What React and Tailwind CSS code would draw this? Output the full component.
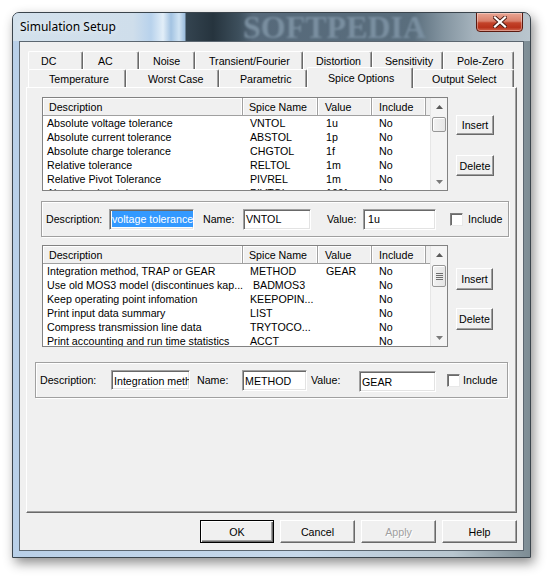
import React from "react";

// tab rows (widths and text offsets read off the dialog)
const tabsTop = [
  { label: "DC", cls: "w-[55px] pl-[12px]" },
  { label: "AC", cls: "w-[56px] pl-[14px]" },
  { label: "Noise", cls: "w-[56px] pl-[13px]" },
  { label: "Transient/Fourier", cls: "w-[108px] pl-[13px]" },
  { label: "Distortion", cls: "w-[69px] pl-[12px]" },
  { label: "Sensitivity", cls: "w-[71px] pl-[12px]" },
  { label: "Pole-Zero", cls: "w-[71px] pl-[13px]" },
];

const tabsBottom = [
  { label: "Temperature", cls: "w-[98px] pl-[20px]" },
  { label: "Worst Case", cls: "w-[93px] pl-[21px]" },
  { label: "Parametric", cls: "w-[88px] pl-[20px]" },
  { label: "Spice Options", cls: "w-[106px] pl-[20px]", selected: true },
  { label: "Output Select", cls: "w-[101px] pl-[18px]" },
];

const options = [
  ["Absolute voltage tolerance", "VNTOL", "1u", "No"],
  ["Absolute current tolerance", "ABSTOL", "1p", "No"],
  ["Absolute charge tolerance", "CHGTOL", "1f", "No"],
  ["Relative tolerance", "RELTOL", "1m", "No"],
  ["Relative Pivot Tolerance", "PIVREL", "1m", "No"],
  ["Absolute pivot tolerance", "PIVTOL", "100f", "No"],
];

const flags = [
  ["Integration method, TRAP or GEAR", "METHOD", "GEAR", "No"],
  ["Use old MOS3 model (discontinues kap...", "\u00a0BADMOS3", "", "No"],
  ["Keep operating point infomation", "KEEPOPIN...", "", "No"],
  ["Print input data summary", "LIST", "", "No"],
  ["Compress transmission line data", "TRYTOCO...", "", "No"],
  ["Print accounting and run time statistics", "ACCT", "", "No"],
];

function Tab({ label, cls, selected }) {
  if (selected) {
    return (
      <div
        className={`relative z-10 -mb-px flex h-[21px] items-center rounded-t-[2px] border-t border-l border-r border-t-white border-l-white border-r-[#696969] bg-[#f0f0f0] shadow-[inset_-1px_0_0_#a0a0a0] ${cls}`}
      >
        {label}
      </div>
    );
  }
  return (
    <div
      className={`flex h-[18px] items-center rounded-t-[2px] border-t border-l border-r border-t-white border-l-white border-r-[#696969] bg-[#f0f0f0] pt-[1px] shadow-[inset_-1px_0_0_#a0a0a0] ${cls}`}
    >
      {label}
    </div>
  );
}

function Btn({ children, cls, isDefault, disabled }) {
  const edge = isDefault
    ? "border-black shadow-[inset_1px_1px_0_#fff,inset_-1px_-1px_0_#696969,inset_-2px_-2px_0_#a0a0a0]"
    : "border-t-white border-l-white border-r-[#696969] border-b-[#696969] shadow-[inset_-1px_-1px_0_#a0a0a0]";
  return (
    <button
      type="button"
      className={`flex items-center justify-center border bg-[#f0f0f0] ${edge} ${
        disabled ? "text-[#a0a0a0] [text-shadow:1px_1px_0_#fff]" : "text-black"
      } ${cls}`}
    >
      {children}
    </button>
  );
}

function Field({ cls, children, top }) {
  return (
    <div
      className={`flex overflow-hidden whitespace-nowrap border border-t-[#a0a0a0] border-l-[#a0a0a0] border-r-white border-b-white bg-white pl-[2px] shadow-[inset_1px_1px_0_#696969,inset_-1px_-1px_0_#e3e3e3] ${
        top ? "items-start pt-[2px]" : "items-center pb-[1px]"
      } ${cls}`}
    >
      {children}
    </div>
  );
}

function Check() {
  return (
    <div className="h-[13px] w-[13px] shrink-0 border border-t-[#808080] border-l-[#808080] border-r-[#e8e8e8] border-b-[#e8e8e8] bg-white shadow-[inset_1px_1px_0_#6a6a6a]" />
  );
}

function Arrow({ up }) {
  return (
    <svg width="7" height="4" viewBox="0 0 7 4">
      {up ? (
        <path d="M0 4 L3.5 0 L7 4 Z" fill="#5a5a5a" />
      ) : (
        <path d="M0 0 L3.5 4 L7 0 Z" fill="#7a7a7a" />
      )}
    </svg>
  );
}

function Scrollbar({ thumbCls, grip }) {
  return (
    <div className="flex w-[17px] shrink-0 flex-col border-l border-[#e6e6e6] bg-[#f4f4f4]">
      <div className="flex h-[17px] shrink-0 items-center justify-center">
        <Arrow up />
      </div>
      <div className="flex flex-1 flex-col px-[1px]">
        <div
          className={`flex items-center justify-center rounded-[2px] border border-[#979797] bg-[linear-gradient(90deg,#f2f2f2,#e6e6e6)] shadow-[inset_1px_1px_0_#fff] ${thumbCls}`}
        >
          {grip && (
            <div className="flex flex-col gap-[1px]">
              <div className="h-px w-[7px] bg-[#6e6e6e]" />
              <div className="h-px w-[7px] bg-[#6e6e6e]" />
              <div className="h-px w-[7px] bg-[#6e6e6e]" />
              <div className="h-px w-[7px] bg-[#6e6e6e]" />
            </div>
          )}
        </div>
      </div>
      <div className="flex h-[17px] shrink-0 items-center justify-center">
        <Arrow />
      </div>
    </div>
  );
}

function HeadCell({ cls, children }) {
  return (
    <div
      className={`flex items-center border-r border-b border-[#a0a0a0] shadow-[inset_1px_1px_0_#fff,inset_-1px_0_0_#fff] ${cls}`}
    >
      {children}
    </div>
  );
}

function ListView({ rows, hCls, thumbCls, grip }) {
  return (
    <div
      className={`flex w-[406px] shrink-0 overflow-hidden border border-[#828282] bg-white ${hCls}`}
    >
      <div className="flex min-w-0 flex-1 flex-col">
        <div className="flex h-[18px] shrink-0 bg-[#f0f0f0]">
          <HeadCell cls="w-[200px] pl-[6px]">Description</HeadCell>
          <HeadCell cls="w-[75px] pl-[6px]">Spice Name</HeadCell>
          <HeadCell cls="w-[54px] pl-[7px]">Value</HeadCell>
          <HeadCell cls="w-[54px] pl-[7px]">Include</HeadCell>
          <div className="flex-1 border-b border-[#a0a0a0]" />
        </div>
        {rows.map((r) => (
          <div key={r[0]} className="flex h-[14px] shrink-0 items-center leading-[14px]">
            <div className="w-[200px] overflow-hidden whitespace-nowrap pl-[4px]">{r[0]}</div>
            <div className="w-[75px] overflow-hidden whitespace-nowrap pl-[7px]">{r[1]}</div>
            <div className="w-[54px] overflow-hidden whitespace-nowrap pl-[8px]">{r[2]}</div>
            <div className="w-[54px] overflow-hidden whitespace-nowrap pl-[7px]">{r[3]}</div>
          </div>
        ))}
      </div>
      <Scrollbar thumbCls={thumbCls} grip={grip} />
    </div>
  );
}

export default function App() {
  return (
    <div className="min-h-screen bg-white pl-[12px] pt-[12px] font-['Liberation_Sans',Arial,sans-serif] text-[10.67px] text-black">
      <div className="flex h-[546px] w-[519px] flex-col rounded-t-[7px] border border-[#3a444c] bg-[linear-gradient(90deg,#b9d0e8_0%,#c6d8ea_55%,#b8c6cf_85%,#7d8c94_100%)] shadow-[3px_5px_12px_rgba(0,0,0,0.45)]">
        {/* title bar */}
        <div className="relative flex h-[28px] shrink-0 items-start overflow-hidden rounded-t-[6px] bg-[linear-gradient(90deg,#d3e1ec_0px,#cfdeeb_120px,#b8d2ec_138px,#e2eef8_150px,#a3c3e2_158px,#d0e3f3_166px,#9cbcdc_172px,#344450_173px,#26343e_200px,#3d4f5c_226px,#56697a_240px,#5a6e7d_400px,#8394a0_430px,#a4b2bc_460px,#bac6ce_517px)]">
          <span className="relative z-10 ml-[7px] mt-[6px] font-['Noto_Sans',sans-serif] text-[12px] leading-[16px] text-black [text-shadow:0_0_6px_#fff]">
            Simulation Setup
          </span>
          <span className="pointer-events-none absolute left-[230px] top-[-2px] font-['Liberation_Serif',serif] text-[32px] font-bold leading-[32px] text-[#7a8fa0] blur-[1px]">
            SOFTPEDIA
          </span>
          <div className="relative z-10 ml-auto mr-[7px] -mt-px flex h-[20px] w-[47px] items-center justify-center rounded-b-[4px] border border-[#5b1a10] bg-[linear-gradient(180deg,#e9a694_0%,#d9806b_45%,#c3432a_55%,#b8321b_80%,#d0674f_100%)] shadow-[inset_0_0_0_1px_rgba(255,255,255,0.35)]">
            <svg width="14" height="12" viewBox="0 0 14 12">
              <path d="M2 1.5 L12 10.5 M12 1.5 L2 10.5" stroke="#4a1c14" strokeWidth="4" strokeLinecap="square" />
              <path d="M2 1.5 L12 10.5 M12 1.5 L2 10.5" stroke="#fff" strokeWidth="2.2" strokeLinecap="square" />
            </svg>
          </div>
        </div>

        {/* client area */}
        <div className="mx-[6px] flex h-[510px] shrink-0 flex-col border border-[#5b6670] bg-[#f0f0f0] pl-[6px] pt-[9px]">
          {/* tabs */}
          <div className="pl-[2px]">
            <div className="flex h-[18px]">
              {tabsTop.map((t) => (
                <Tab key={t.label} {...t} />
              ))}
            </div>
            <div className="flex h-[18px] items-end">
              {tabsBottom.map((t) => (
                <Tab key={t.label} {...t} />
              ))}
            </div>
          </div>

          {/* tab page */}
          <div className="flex h-[426px] w-[491px] flex-col border border-t-white border-l-white border-r-[#696969] border-b-[#696969] bg-[#f0f0f0] shadow-[inset_-1px_-1px_0_#a0a0a0]">
            {/* options list */}
            <div className="ml-[15px] mt-[9px] flex">
              <ListView rows={options} hCls="h-[94px]" thumbCls="mt-[2px] h-[15px]" />
              <div className="ml-[8px] flex flex-col">
                <Btn cls="mt-[18px] h-[20px] w-[38px]">Insert</Btn>
                <Btn cls="mt-[20px] h-[21px] w-[38px]">Delete</Btn>
              </div>
            </div>

            {/* edit group 1 */}
            <div className="ml-[14px] mt-[10px] flex h-[36px] w-[468px] items-center border border-[#a0a0a0] pl-[4px] shadow-[inset_1px_1px_0_#fff,1px_1px_0_#fff]">
              <span className="w-[63px] shrink-0">Description:</span>
              <Field cls="h-[21px] w-[85px]">
                <span className="bg-[#3399ff] text-white">voltage tolerance</span>
                <span className="h-[13px] w-px bg-black" />
              </Field>
              <span className="ml-[9px] w-[40px] shrink-0">Name:</span>
              <Field cls="h-[21px] w-[68px]">VNTOL</Field>
              <span className="ml-[16px] w-[36px] shrink-0">Value:</span>
              <Field cls="h-[21px] w-[73px]">
                <span className="pl-[2px]">1u</span>
              </Field>
              <div className="ml-[14px]">
                <Check />
              </div>
              <span className="ml-[5px]">Include</span>
            </div>

            {/* flags list */}
            <div className="ml-[15px] mt-[8px] flex">
              <ListView rows={flags} hCls="h-[102px]" thumbCls="mt-[2px] h-[22px]" grip />
              <div className="ml-[8px] flex flex-col">
                <Btn cls="mt-[23px] h-[22px] w-[37px]">Insert</Btn>
                <Btn cls="mt-[18px] h-[22px] w-[37px]">Delete</Btn>
              </div>
            </div>

            {/* edit group 2 */}
            <div className="ml-[8px] mt-[15px] flex h-[36px] w-[473px] items-center border border-[#a0a0a0] pl-[4px] shadow-[inset_1px_1px_0_#fff,1px_1px_0_#fff]">
              <span className="w-[71px] shrink-0">Description:</span>
              <Field cls="h-[20px] w-[79px]" top>
                Integration meth
              </Field>
              <span className="ml-[7px] w-[45px] shrink-0">Name:</span>
              <Field cls="h-[21px] w-[65px]" top>
                METHOD
              </Field>
              <span className="ml-[4px] w-[48px] shrink-0">Value:</span>
              <Field cls="mt-[2px] h-[21px] w-[77px]" top>
                GEAR
              </Field>
              <div className="ml-[11px]">
                <Check />
              </div>
              <span className="ml-[3px]">Include</span>
            </div>
          </div>

          {/* dialog buttons */}
          <div className="mt-[7px] flex w-[491px] justify-end gap-[6px]">
            <Btn cls="h-[23px] w-[74px]" isDefault>
              OK
            </Btn>
            <Btn cls="h-[23px] w-[75px]">Cancel</Btn>
            <Btn cls="h-[23px] w-[75px]" disabled>
              Apply
            </Btn>
            <Btn cls="h-[23px] w-[75px]">Help</Btn>
          </div>
        </div>
      </div>
    </div>
  );
}
